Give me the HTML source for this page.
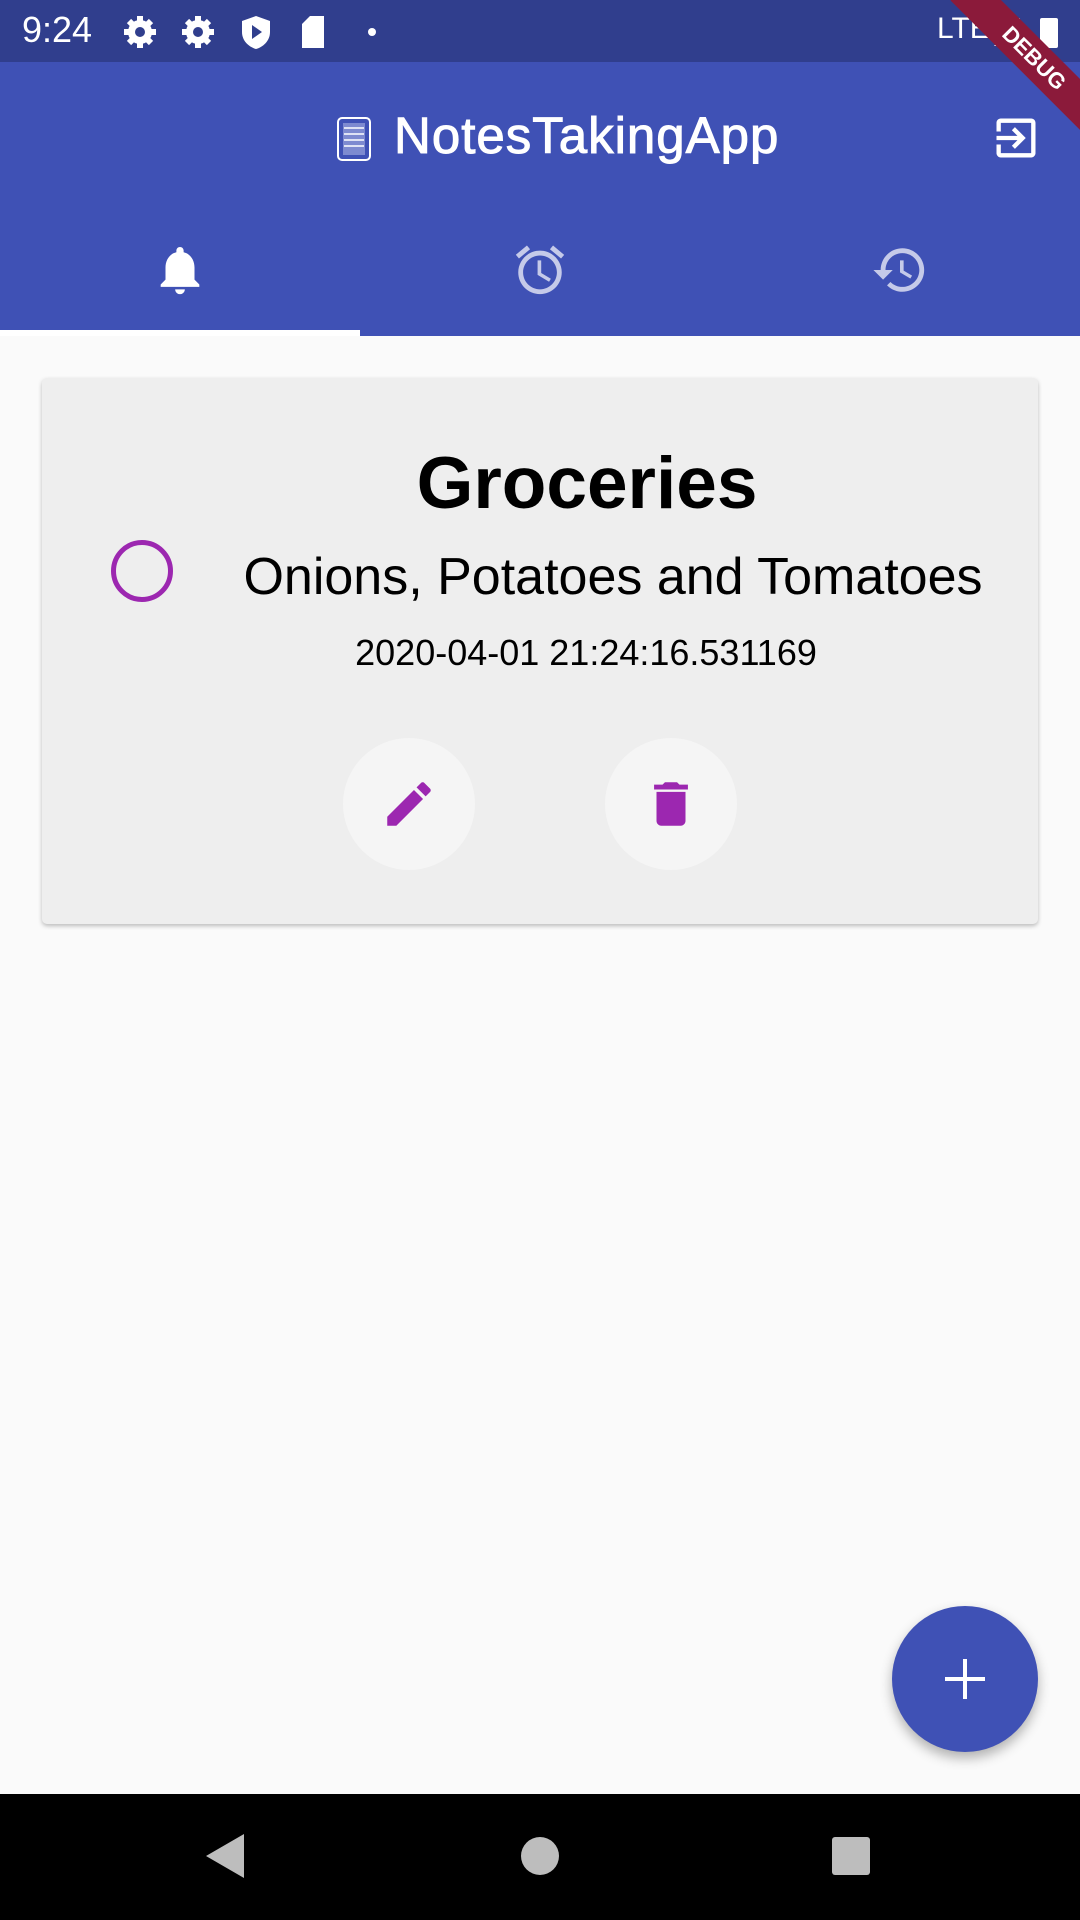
<!DOCTYPE html>
<html><head><meta charset="utf-8"><style>
*{margin:0;padding:0;box-sizing:border-box}
body{width:1080px;height:1920px;background:#fafafa;position:relative;overflow:hidden;font-family:"Liberation Sans",Roboto,sans-serif}
.abs{position:absolute}
</style></head><body>
<div class="abs" style="left:0;top:0;width:1080px;height:62px;background:#303e8d"></div>
<div class="abs" style="left:22px;top:9px;color:#fff;font-size:36px">9:24</div>
<svg class="abs" style="left:120px;top:12px" width="270" height="40" viewBox="0 0 270 40">
<g fill="#fff">
<circle cx="20" cy="20" r="12"/><g stroke="#fff" stroke-width="6"><line x1="20" y1="4" x2="20" y2="36"/><line x1="4" y1="20" x2="36" y2="20"/><line x1="9" y1="9" x2="31" y2="31"/><line x1="31" y1="9" x2="9" y2="31"/></g>
<circle cx="20" cy="20" r="5" fill="#303e8d"/>
<circle cx="78" cy="20" r="12"/><g stroke="#fff" stroke-width="6"><line x1="78" y1="4" x2="78" y2="36"/><line x1="62" y1="20" x2="94" y2="20"/><line x1="67" y1="9" x2="89" y2="31"/><line x1="89" y1="9" x2="67" y2="31"/></g>
<circle cx="78" cy="20" r="5" fill="#303e8d"/>
<path d="M136 4 L150 9 V20 C150 29 143 35 136 37 C129 35 122 29 122 20 V9 Z"/><path d="M132 13 L142 20 L132 27Z" fill="#303e8d"/>
<path d="M190 4 H204 V36 H182 V12 Z"/>
<circle cx="252" cy="20" r="4"/>
</g></svg>
<div class="abs" style="left:937px;top:12px;color:#fff;font-size:30px">LTE</div>
<svg class="abs" style="left:990px;top:14px" width="80" height="36"><path d="M4 32 L30 4 V32Z" fill="#fff"/><rect x="50" y="4" width="18" height="30" rx="2" fill="#fff"/></svg>
<div class="abs" style="left:0;top:62px;width:1080px;height:274px;background:#3f51b5"></div>
<svg class="abs" style="left:336px;top:114px" width="36" height="48"><rect x="2" y="4" width="32" height="42" rx="4" fill="none" stroke="#fff" stroke-width="2"/><rect x="7" y="9" width="22" height="32" fill="#7d8ad0"/><g stroke="#fff" stroke-width="1.5"><line x1="8" y1="14" x2="28" y2="14"/><line x1="8" y1="20" x2="28" y2="20"/><line x1="8" y1="26" x2="28" y2="26"/><line x1="8" y1="32" x2="28" y2="32"/></g></svg>
<div class="abs" style="left:394px;top:106px;color:#fff;font-size:51px;letter-spacing:1px;-webkit-text-stroke:1px #fff">NotesTakingApp</div>
<svg class="abs" style="left:990px;top:112px" width="52" height="52" viewBox="0 0 24 24"><path fill="#fff" d="M10.09 15.59L11.5 17l5-5-5-5-1.41 1.41L12.67 11H3v2h9.67l-2.58 2.59zM19 3H5c-1.11 0-2 .9-2 2v4h2V5h14v14H5v-4H3v4c0 1.1.89 2 2 2h14c1.1 0 2-.9 2-2V5c0-1.1-.9-2-2-2z"/></svg>
<div class="abs" style="left:950px;top:0;width:200px;height:36px;background:#8b1a3a;transform-origin:0 0;transform:translate(26px,-25px) rotate(45deg);color:#fff;font-weight:bold;font-size:22px;text-align:center;line-height:36px">DEBUG</div>
<svg class="abs" style="left:151px;top:241px" width="58" height="58" viewBox="0 0 24 24"><path fill="#fff" d="M12 22c1.1 0 2-.9 2-2h-4c0 1.1.89 2 2 2zm6-6v-5c0-3.07-1.64-5.64-4.5-6.32V4c0-.83-.67-1.5-1.5-1.5s-1.5.67-1.5 1.5v.68C7.63 5.36 6 7.920 6 11v5l-2 2v1h16v-1l-2-2z"/></svg>
<svg class="abs" style="left:511px;top:241px" width="58" height="58" viewBox="0 0 24 24"><path fill="#c5cae9" d="M22 5.72l-4.6-3.86-1.29 1.53 4.6 3.86L22 5.72zM7.880 3.39L6.6 1.86 2 5.71l1.29 1.53 4.59-3.85zM12.5 8H11v6l4.75 2.85.75-1.23-4-2.37V8zM12 4c-4.97 0-9 4.03-9 9s4.02 9 9 9c4.97 0 9-4.03 9-9s-4.03-9-9-9zm0 16c-3.87 0-7-3.13-7-7s3.13-7 7-7 7 3.13 7 7-3.13 7-7 7z"/></svg>
<svg class="abs" style="left:871px;top:241px" width="58" height="58" viewBox="0 0 24 24"><path fill="#c5cae9" d="M13 3c-4.97 0-9 4.03-9 9H1l3.89 3.89.07.14L9 12H6c0-3.87 3.13-7 7-7s7 3.13 7 7-3.13 7-7 7c-1.93 0-3.68-.79-4.94-2.06l-1.42 1.42C8.27 19.99 10.51 21 13 21c4.970 0 9-4.03 9-9s-4.03-9-9-9zm-1 5v5l4.28 2.54.72-1.21-3.5-2.08V8H12z"/></svg>
<div class="abs" style="left:0;top:330px;width:360px;height:6px;background:#fff"></div>
<div class="abs" style="left:42px;top:378px;width:996px;height:546px;background:#eeeeee;border-radius:5px;box-shadow:0 2px 4px rgba(0,0,0,.25)"></div>
<div class="abs" style="left:42px;top:442px;width:1090px;text-align:center;font-size:73px;font-weight:bold;color:#000">Groceries</div>
<div class="abs" style="left:111px;top:540px;width:62px;height:62px;border-radius:50%;border:5px solid #9c27b0"></div>
<div class="abs" style="left:200px;top:547px;width:826px;text-align:center;font-size:52px;color:#000">Onions, Potatoes and Tomatoes</div>
<div class="abs" style="left:200px;top:632px;width:772px;text-align:center;font-size:36px;color:#000">2020-04-01 21:24:16.531169</div>
<div class="abs" style="left:343px;top:738px;width:132px;height:132px;border-radius:50%;background:#f5f5f5"></div>
<div class="abs" style="left:605px;top:738px;width:132px;height:132px;border-radius:50%;background:#f5f5f5"></div>
<svg class="abs" style="left:380px;top:775px" width="58" height="58" viewBox="0 0 24 24"><path fill="#9c27b0" d="M3 17.25V21h3.75L17.81 9.94l-3.75-3.75L3 17.25zM20.71 7.04c.39-.39.39-1.02 0-1.41l-2.34-2.34c-.39-.39-1.02-.39-1.41 0l-1.83 1.83 3.75 3.75 1.83-1.83z"/></svg>
<svg class="abs" style="left:642px;top:775px" width="58" height="58" viewBox="0 0 24 24"><path fill="#9c27b0" d="M6 19c0 1.1.9 2 2 2h8c1.1 0 2-.9 2-2V7H6v12zM19 4h-3.5l-1-1h-5l-1 1H5v2h14V4z"/></svg>
<div class="abs" style="left:892px;top:1606px;width:146px;height:146px;border-radius:50%;background:#3f51b5;box-shadow:0 6px 12px rgba(0,0,0,.3)"></div>
<svg class="abs" style="left:943px;top:1657px" width="44" height="44"><rect x="20" y="2" width="4" height="40" fill="#fff"/><rect x="2" y="20" width="40" height="4" fill="#fff"/></svg>
<div class="abs" style="left:0;top:1794px;width:1080px;height:126px;background:#000"></div>
<svg class="abs" style="left:0;top:1794px" width="1080" height="126"><path d="M206 62 L244 40 V84Z" fill="#bdbdbd"/><circle cx="540" cy="62" r="19" fill="#bdbdbd"/><rect x="832" y="43" width="38" height="38" rx="3" fill="#bdbdbd"/></svg>
</body></html>
